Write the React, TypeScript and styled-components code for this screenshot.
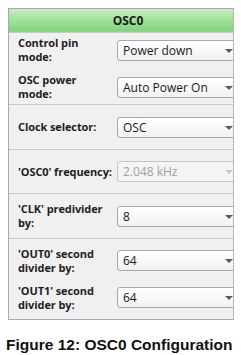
import React from "react";
import styled, { createGlobalStyle } from "styled-components";

const GlobalStyle = createGlobalStyle`
  html, body {
    margin: 0;
    padding: 0;
    background: #ffffff;
  }
`;

const Page = styled.div`
  width: 241px;
  height: 355px;
  padding: 8px 8px 0 8px;
  box-sizing: border-box;
  display: flex;
  flex-direction: column;
`;

const Panel = styled.div`
  width: 226px;
  box-sizing: border-box;
  border: 1px solid #a9a9a9;
  border-right: 1px solid #b8b8b8;
  background: #f0f0f0;
  overflow: hidden;
  font-family: "Open Sans", "Noto Sans", sans-serif;
`;

const Header = styled.div`
  height: 22px;
  display: flex;
  align-items: center;
  justify-content: center;
  padding-left: 14px;
  background: linear-gradient(#c6eebe, #7fd577);
  border-bottom: 1px solid #9fc79a;
  font-size: 12px;
  font-weight: 700;
  color: #1a1a1a;
`;

const Section = styled.div<{ $h: number }>`
  height: ${(p) => p.$h}px;
  box-sizing: border-box;
  display: flex;
  flex-direction: column;
  justify-content: center;
  gap: 9px;
  padding-left: 9px;
  border-top: 1px solid #c8c8c8;
  &:first-of-type {
    border-top: none;
  }
`;

const Row = styled.div`
  display: flex;
  align-items: center;
`;

const Label = styled.div`
  width: 99px;
  flex-shrink: 0;
  font-size: 11px;
  font-weight: 700;
  line-height: 14px;
  color: #1e1e1e;
  white-space: nowrap;
  letter-spacing: -0.1px;
`;

const Select = styled.div<{ $disabled?: boolean }>`
  position: relative;
  width: 130px;
  flex-shrink: 0;
  height: 21px;
  box-sizing: border-box;
  border: 1px solid ${(p) => (p.$disabled ? "#c6c6c6" : "#a8a8a8")};
  border-radius: 3px;
  background: ${(p) =>
    p.$disabled ? "#f4f4f4" : "linear-gradient(#ffffff, #f1f1f1)"};
  display: flex;
  align-items: center;
  padding-left: 5px;
  font-size: 12px;
  color: ${(p) => (p.$disabled ? "#a0a0a0" : "#1a1a1a")};
`;

const Arrow = styled.div<{ $disabled?: boolean }>`
  position: absolute;
  left: 107px;
  top: 8px;
  width: 0;
  height: 0;
  border-left: 4px solid transparent;
  border-right: 4px solid transparent;
  border-top: 4px solid ${(p) => (p.$disabled ? "#c4c4c4" : "#5a5a5a")};
`;

const Caption = styled.div`
  margin-top: 16px;
  margin-left: -2px;
  font-family: "Liberation Sans", Arial, sans-serif;
  font-weight: 700;
  font-size: 15.5px;
  color: #111111;
  white-space: nowrap;
`;

type Field = { label: React.ReactNode; value: string; disabled?: boolean };

const sections: { h: number; fields: Field[] }[] = [
  {
    h: 72,
    fields: [
      { label: <>Control pin<br />mode:</>, value: "Power down" },
      { label: <>OSC power<br />mode:</>, value: "Auto Power On" },
    ],
  },
  { h: 45, fields: [{ label: "Clock selector:", value: "OSC" }] },
  {
    h: 44,
    fields: [{ label: "'OSC0' frequency:", value: "2.048 kHz", disabled: true }],
  },
  {
    h: 45,
    fields: [{ label: <>'CLK' predivider<br />by:</>, value: "8" }],
  },
  {
    h: 81,
    fields: [
      { label: <>'OUT0' second<br />divider by:</>, value: "64" },
      { label: <>'OUT1' second<br />divider by:</>, value: "64" },
    ],
  },
];

export default function App() {
  return (
    <>
      <GlobalStyle />
      <Page>
        <Panel>
          <Header>OSC0</Header>
          {sections.map((s, i) => (
            <Section key={i} $h={s.h}>
              {s.fields.map((f, j) => (
                <Row key={j}>
                  <Label>{f.label}</Label>
                  <Select $disabled={f.disabled}>
                    {f.value}
                    <Arrow $disabled={f.disabled} />
                  </Select>
                </Row>
              ))}
            </Section>
          ))}
        </Panel>
        <Caption>Figure 12: OSC0 Configuration</Caption>
      </Page>
    </>
  );
}
